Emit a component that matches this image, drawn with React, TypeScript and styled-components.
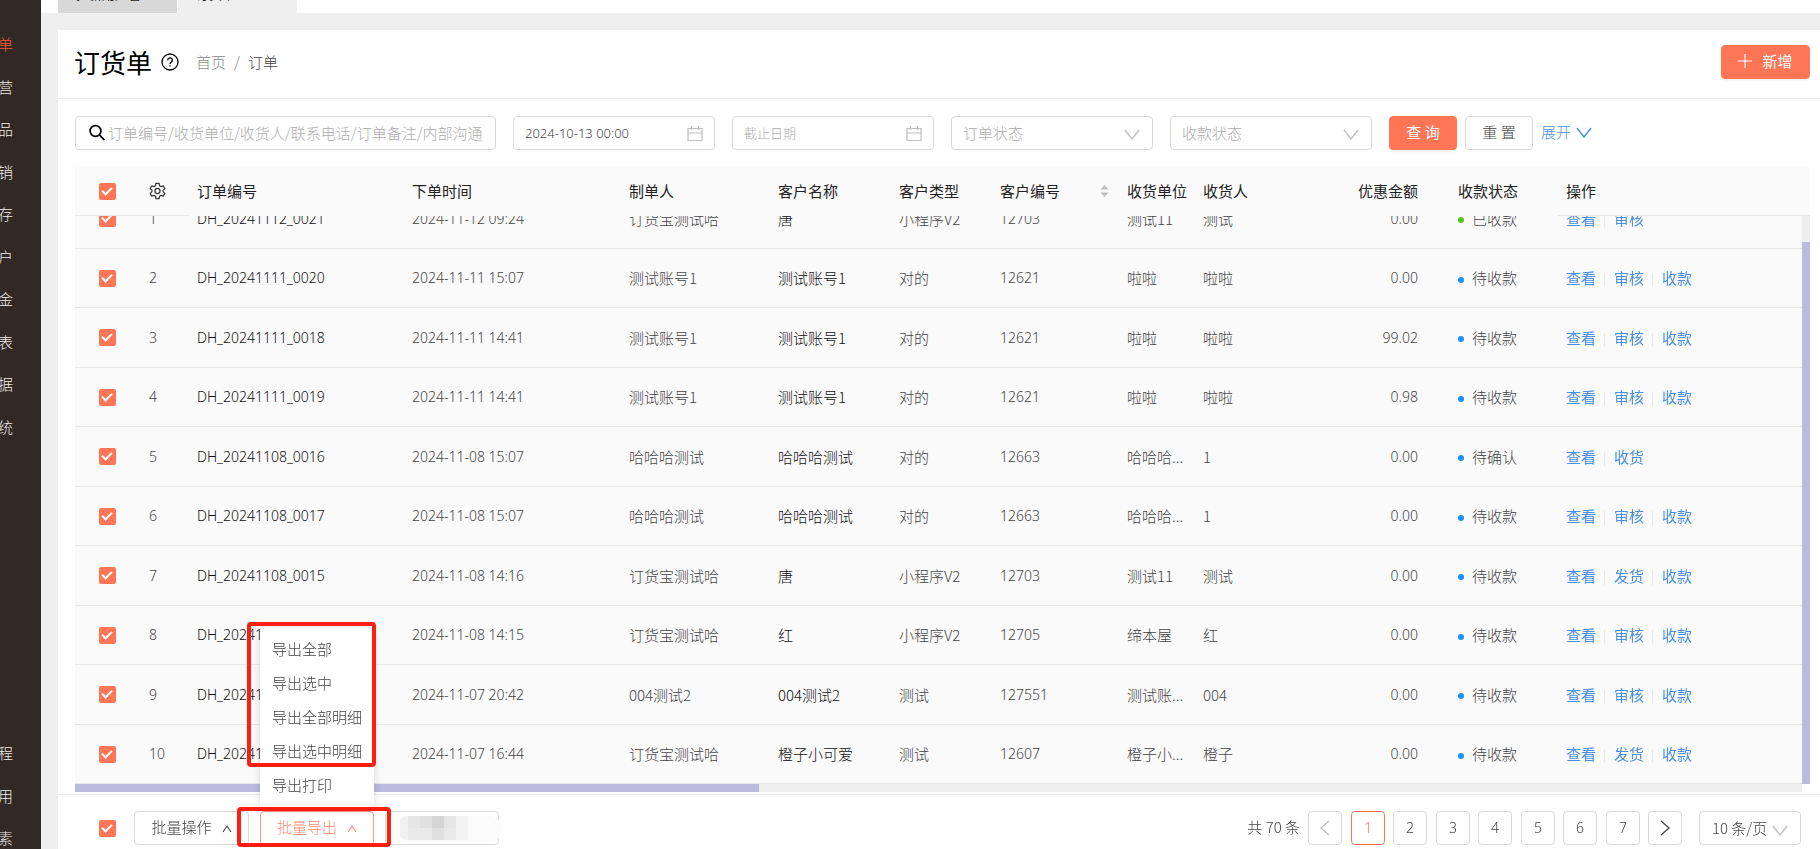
import React, { useLayoutEffect, useRef } from 'react';
import styled, { createGlobalStyle, css } from 'styled-components';

const accent = '#ff7657';
const link = '#4a90e2';
const line = '#e8e8e8';
const cjk = `'Noto Sans CJK SC', 'Liberation Sans', sans-serif`;
const latin = `'Noto Sans', 'Noto Sans CJK SC', sans-serif`;

const Global = createGlobalStyle`
  *, *::before, *::after { box-sizing: border-box; }
  body { margin: 0; font: 300 15px/22px ${cjk}; color: #444; background: #efefef; }
  button, input, select { font: inherit; color: inherit; }
  a { color: ${link}; text-decoration: none; }
`;

const Shell = styled.div`display: flex; height: 100vh; overflow: hidden;`;

const Sidebar = styled.nav`
  flex: none; width: 41px; overflow: hidden; background: #322824;
  display: flex; flex-direction: column; justify-content: space-between;
  padding-top: 23px;
`;
const NavGroup = styled.div`
  display: flex; flex-direction: column;
  &:last-child { margin-bottom: -10px; }
`;
const NavItem = styled.a<{ $active?: boolean }>`
  display: flex; align-items: center; flex: none; height: 42px; margin-left: -2px;
  color: ${p => (p.$active ? '#f5593a' : '#f0eeed')};
  &:nth-child(even) { height: 43px; }
`;

const Main = styled.main`flex: 1; min-width: 0; display: flex; flex-direction: column;`;
const TabBar = styled.div`
  flex: none; display: flex; align-items: flex-end; gap: 1px; height: 13px;
  margin-bottom: 17px; padding-left: 17px; background: #fff; overflow: hidden;
`;
const Tab = styled.a<{ $active?: boolean }>`
  flex: none; width: 119px; height: 34px; padding: 0 18px; font-size: 13px; line-height: 30px;
  white-space: nowrap; font-weight: 400;
  color: #222; background: ${p => (p.$active ? '#efefef' : '#d8d8d8')};
`;
const Card = styled.section`
  flex: 1; min-height: 0; margin-left: 17px; background: #fff;
  display: flex; flex-direction: column;
`;
const Header = styled.header`
  flex: none; display: flex; align-items: center; height: 69px; padding: 0 10px 4px 16px;
  border-bottom: 1px solid #eee;
`;
const Title = styled.h1`margin: 0 9px 0 0; font-size: 26px; line-height: 36px; font-weight: 400; color: #000;`;
const Crumbs = styled.nav`
  display: flex; gap: 8px; margin-left: 17px; color: #888;
  a { color: #888; font-weight: 300; }
  b { font-weight: 300; color: #444; }
`;
const Button = styled.button<{ $kind?: 'primary' | 'ghost'; $w?: number }>`
  display: flex; align-items: center; justify-content: center; gap: 10px;
  height: 34px; width: ${p => p.$w ?? 68}px; padding: 0 0 2px; flex: none;
  border: 1px solid #d9d9d9; border-radius: 4px; background: #fff; white-space: nowrap;
  ${p => p.$kind === 'primary' && css`
    border-color: ${accent}; background: ${accent}; color: #fff; font-weight: 400;
    box-shadow: 0 2px 2px rgba(0, 0, 0, 0.05);
  `}
  ${p => p.$kind === 'ghost' && css`border-color: #ff9a83; color: #ff8a70;`}
`;
const MoreButton = styled(Button)`justify-content: flex-end; padding: 0; svg { flex: none; margin-right: -4px; }`;
const Push = styled.div`margin-left: auto;`;

const Filters = styled.form`
  flex: none; display: flex; align-items: center; gap: 17px; padding: 17px;
`;
const Field = styled.label<{ $w: number; $small?: boolean }>`
  display: flex; align-items: center; flex: 0 1 ${p => p.$w}px; min-width: 0; height: 34px;
  padding: 0 11px; border: 1px solid #d9d9d9; border-radius: 4px; background: #fff;
  input {
    flex: 1; min-width: 0; padding: 0; border: 0; outline: 0; background: none;
    font-size: ${p => (p.$small ? 13 : 15)}px;
    ${p => p.$small && `font-family: ${latin};`}
  }
  input::placeholder { color: #adadad; opacity: 1; }
  svg { flex: none; }
`;
const SearchField = styled(Field)`svg { margin: 0 2px 0 1px; }`;
const Select = styled.select`
  flex: 1; min-width: 0; appearance: none; padding: 0; border: 0; outline: 0;
  background: none; color: inherit;
`;
const SelectField = styled(Field)`
  color: #adadad;
  padding-right: 12px;
  svg { margin-top: 3px; }
`;
const Actions = styled.div`
  display: flex; align-items: center; gap: 8px;
  > a { display: flex; align-items: center; gap: 5px; padding-bottom: 2px; white-space: nowrap; }
`;

const TableArea = styled.div`
  flex: 1; min-height: 0; margin: 0 10px 0 17px; display: flex; flex-direction: column;
`;
const Table = styled.table`
  width: 100%; table-layout: fixed; border-collapse: separate; border-spacing: 0; background: #fafafa;
  th, td { padding: 0 8px; text-align: left; font-weight: 300; white-space: nowrap; overflow: hidden; }
  th { height: 49px; color: #222; font-weight: 400; border-bottom: 1px solid #fafafa; }
  td { height: 60px; border-bottom: 1px solid ${line}; }
  tr:nth-child(even) td { height: 59px; }
  th:nth-child(-n+2), th:last-child { border-bottom-color: ${line}; }
  tr > :first-child { padding-left: 24px; }
`;
const Cell = styled.td<{ $num?: boolean; $dark?: boolean; $right?: boolean }>`
  ${p => p.$num && css`font-family: ${latin}; font-size: 14px;`}
  ${p => p.$dark && css`color: #111;`}
  && { ${p => p.$right && css`text-align: right; padding-right: 32px;`} text-overflow: ellipsis; }
`;
const RightTh = styled.th`&& { text-align: right; padding-right: 32px; }`;
const SortTh = styled.div`display: flex; align-items: center; justify-content: space-between; padding-right: 2px;`;
const BodyRow = styled.div`flex: 1; min-height: 0; display: flex;`;
const Viewport = styled.div`flex: 1; min-width: 0; overflow: hidden auto; scrollbar-width: none;`;
const VTrack = styled.div`
  flex: none; width: 8px; background: #eee; display: flex; flex-direction: column; justify-content: flex-end;
  &::after { content: ''; height: 95.4%; background: #bbbadf; }
`;
const HTrack = styled.div`
  flex: none; height: 8px; margin: 0 8px 2px 0; background: #eee;
  &::after { content: ''; display: block; width: 39.6%; height: 8px; background: #bbbadf; }
`;
const Check = styled.input.attrs({ type: 'checkbox' })`
  appearance: none; display: block; flex: none; width: 17px; height: 17px; margin: 0; border-radius: 2px;
  background: ${accent}; position: relative;
  &:checked::after {
    content: ''; position: absolute; left: 5px; top: 2px; width: 6px; height: 10px;
    border: solid #fff; border-width: 0 2px 2px 0; transform: rotate(45deg);
  }
`;
const Status = styled.span<{ $c: string }>`
  display: flex; align-items: center; gap: 8px;
  &::before { content: ''; width: 6px; height: 6px; margin-top: 3px; border-radius: 50%; background: ${p => p.$c}; }
`;
const Ops = styled.div`
  display: flex; align-items: center;
  a { font-weight: 400; }
  a + a { margin-left: 8px; padding-left: 10px; position: relative; }
  a + a::before { content: ''; position: absolute; left: 0; top: 6px; height: 14px; border-left: 1px solid ${line}; }
`;

const Footer = styled.footer`
  flex: none; display: flex; align-items: center; height: 55px; padding: 12px 19px 0 41px;
  border-top: 1px solid #eee;
`;
const Batch = styled.div`display: flex; gap: 11px; margin-left: 18px;`;
const MenuAnchor = styled.div`position: relative;`;
const Menu = styled.ul`
  position: absolute; left: 0; bottom: 37px; width: 114px; margin: 0; padding: 5px 0; list-style: none;
  background: #fff; border-radius: 4px; box-shadow: 0 2px 8px rgba(0, 0, 0, 0.15);
  li { height: 34px; padding: 0 12px; line-height: 32px; white-space: nowrap; }
`;
const Mark = styled.div<{ $l: number; $b: number; $w: number; $h: number }>`
  position: absolute; z-index: 2; pointer-events: none; border: 4px solid #ff1f12; border-radius: 4px;
  left: ${p => p.$l}px; bottom: ${p => p.$b}px; width: ${p => p.$w}px; height: ${p => p.$h}px;
`;
const Pager = styled.nav`
  display: flex; align-items: center; margin-left: auto;
  > span { margin-right: 8px; padding-bottom: 2px; }
`;
const Page = styled.button<{ $on?: boolean }>`
  display: flex; align-items: center; justify-content: center; width: 34px; height: 34px; padding: 0 0 1px;
  margin-right: 8px; border-radius: 4px; background: #fff; font-family: ${latin}; font-size: 14px;
  border: 1px solid ${p => (p.$on ? accent : '#d9d9d9')};
  color: ${p => (p.$on ? accent : '#444')};
  &:nth-child(even) { margin-right: 9px; }
  &:disabled { color: #bfbfbf; }
`;
const SizeField = styled(Field)`margin-left: 8px; flex: none; width: 102px; padding: 0 12px; svg { margin-top: 5px; }`;

const Chevron = ({ d = '', w = 16, h = 11, c = 'currentColor', s = 1.3 }) => (
  <svg width={w} height={h} viewBox={`0 0 ${w} ${h}`} fill="none" stroke={c} strokeWidth={s}><path d={d} /></svg>
);
const Down = ({ c = '#bfbfbf' }) => <Chevron d="M1 1l7 9 7-9" c={c} s={1.4} />;
const Up = () => <svg width="10" height="11" viewBox="0 0 10 11" fill="none" stroke="currentColor" strokeWidth="1.100"><path d="M1 10l4-6 4 6" /></svg>;
const CalendarIcon = () => (
  <svg width="16" height="18" viewBox="0 0 16 18" fill="none" stroke="#bfbfbf" strokeWidth="1.200">
    <path d="M1 4.500h14v12H1zM1 9h14M4.500 2v4M11.500 2v4" />
  </svg>
);
const HelpIcon = () => (
  <svg width="18" height="18" viewBox="0 0 18 18" fill="none" stroke="#000" strokeWidth="1.300">
    <circle cx="9" cy="9" r="8" />
    <path d="M6.700 7.200a2.300 2.300 0 1 1 3.600 1.900c-.9.6-1.300 1-1.300 1.900M9 12.200v1.400" />
  </svg>
);
const SearchIcon = () => (
  <svg width="18" height="18" viewBox="0 0 18 18" fill="none" stroke="#000" strokeWidth="1.700">
    <circle cx="7.500" cy="7" r="5.400" /><path d="M11.500 11l5 5.200" />
  </svg>
);
const GearIcon = () => (
  <svg width="17" height="20" viewBox="0 0 18 18" fill="none" stroke="#333" strokeWidth="1.300" strokeLinejoin="round">
    <path d="M7.300 1h3.400l.5 2.500 1.500.9 2.400-.9 1.700 3-1.900 1.600v1.800l1.900 1.600-1.700 3-2.400-.9-1.500.9-.5 2.500H7.300l-.5-2.500-1.500-.9-2.400.9-1.700-3 1.900-1.600V8.100L1.200 6.500l1.700-3 2.400.9 1.500-.9z" />
    <circle cx="9" cy="9" r="2.700" />
  </svg>
);
const GearButton = styled.button`display: flex; padding: 0; border: 0; background: none;`;
const SortIcon = () => (
  <svg width="9" height="14" viewBox="0 0 9 14" fill="#bfbfbf"><path d="M4.500 1L8.500 5.500h-8zM4.500 13L8.500 8.500h-8z" /></svg>
);
const PlusIcon = () => (
  <svg width="14" height="14" viewBox="0 0 14 14" stroke="#fff" strokeWidth="1.200"><path d="M7 0v14M0 7h14" /></svg>
);
const Mosaic = () => (
  <svg width="102" height="30" viewBox="0 0 102 30">
    <rect x="0" y="3" width="102" height="26" rx="12" fill="#fbfbfb" />
    <path d="M8 3h12v24H8a12 12 0 0 1 0-24z" fill="#f0f0f0" />
    <path d="M8 3h12v12H8z" fill="#e6e6e6" /><path d="M20 3h12v12H20z" fill="#e0e0e0" />
    <path d="M32 3h12v12H32z" fill="#d5d5d5" /><path d="M44 3h12v12H44z" fill="#e6e6e6" />
    <path d="M8 15h24v12H8z" fill="#e9e9e9" /><path d="M32 15h12v12H32z" fill="#e0e0e0" />
    <path d="M44 15h12v12H44z" fill="#e9e9e9" /><path d="M56 3h12v24H56z" fill="#f3f3f3" />
  </svg>
);

const widths = [66, 48, 215, 217, 149, 121, 101, 127, 76, 125, 130, 108];
const Cols = () => (
  <colgroup>{widths.map((w, i) => <col key={i} style={{ width: w }} />)}<col /></colgroup>
);

const V = '查看', S = '审核', K = '收款', F = '发货';
type Row = [string, string, string, string, string, string, string, string, string, string, string[]];
const rows: Row[] = [
  ['DH_20241112_0021', '2024-11-12 09:24', '订货宝测试哈', '唐', '小程序V2', '12703', '测试11', '测试', '0.00', '已收款', [V, S]],
  ['DH_20241111_0020', '2024-11-11 15:07', '测试账号1', '测试账号1', '对的', '12621', '啦啦', '啦啦', '0.00', '待收款', [V, S, K]],
  ['DH_20241111_0018', '2024-11-11 14:41', '测试账号1', '测试账号1', '对的', '12621', '啦啦', '啦啦', '99.02', '待收款', [V, S, K]],
  ['DH_20241111_0019', '2024-11-11 14:41', '测试账号1', '测试账号1', '对的', '12621', '啦啦', '啦啦', '0.98', '待收款', [V, S, K]],
  ['DH_20241108_0016', '2024-11-08 15:07', '哈哈哈测试', '哈哈哈测试', '对的', '12663', '哈哈哈...', '1', '0.00', '待确认', [V, '收货']],
  ['DH_20241108_0017', '2024-11-08 15:07', '哈哈哈测试', '哈哈哈测试', '对的', '12663', '哈哈哈...', '1', '0.00', '待收款', [V, S, K]],
  ['DH_20241108_0015', '2024-11-08 14:16', '订货宝测试哈', '唐', '小程序V2', '12703', '测试11', '测试', '0.00', '待收款', [V, F, K]],
  ['DH_20241108_0014', '2024-11-08 14:15', '订货宝测试哈', '红', '小程序V2', '12705', '缔本屋', '红', '0.00', '待收款', [V, S, K]],
  ['DH_20241107_0013', '2024-11-07 20:42', '004测试2', '004测试2', '测试', '127551', '测试账...', '004', '0.00', '待收款', [V, S, K]],
  ['DH_20241107_0012', '2024-11-07 16:44', '订货宝测试哈', '橙子小可爱', '测试', '12607', '橙子小...', '橙子', '0.00', '待收款', [V, F, K]],
];

export default function App() {
  const viewport = useRef<HTMLDivElement>(null);
  useLayoutEffect(() => {
    const el = viewport.current;
    if (el) el.scrollTop = el.scrollHeight;
  }, []);

  return (
    <Shell>
      <Global />
      <Sidebar>
        <NavGroup>
          {['单', '营', '品', '销', '存', '户', '金', '表', '据', '统'].map((t, i) => (
            <NavItem key={t} href="#" $active={i === 0}>{t}</NavItem>
          ))}
        </NavGroup>
        <NavGroup>
          {['程', '用', '素'].map(t => <NavItem key={t} href="#">{t}</NavItem>)}
        </NavGroup>
      </Sidebar>
      <Main>
        <TabBar>
          <Tab href="#">拉新用户管理</Tab>
          <Tab href="#" $active>订货单</Tab>
        </TabBar>
        <Card>
          <Header>
            <Title>订货单</Title>
            <HelpIcon />
            <Crumbs><a href="#">首页</a><span>/</span><b>订单</b></Crumbs>
            <Push><Button $kind="primary" $w={89}><PlusIcon />新增</Button></Push>
          </Header>
          <Filters onSubmit={e => e.preventDefault()}>
            <SearchField $w={421}><SearchIcon /><input aria-label="搜索" placeholder="订单编号/收货单位/收货人/联系电话/订单备注/内部沟通" /></SearchField>
            <Field $w={202} $small><input aria-label="开始日期" defaultValue="2024-10-13 00:00" /><CalendarIcon /></Field>
            <Field $w={202} $small><input aria-label="截止日期" placeholder="截止日期" /><CalendarIcon /></Field>
            <SelectField $w={202}><Select aria-label="订单状态"><option>订单状态</option></Select><Down /></SelectField>
            <SelectField $w={202}><Select aria-label="收款状态"><option>收款状态</option></Select><Down /></SelectField>
            <Actions>
              <Button $kind="primary" type="submit">查 询</Button>
              <Button type="reset">重 置</Button>
              <a href="#">展开 <Down c={link} /></a>
            </Actions>
          </Filters>
          <TableArea>
            <Table>
              <Cols />
              <thead>
                <tr>
                  <th><Check defaultChecked aria-label="全选" /></th>
                  <th><GearButton aria-label="列设置"><GearIcon /></GearButton></th>
                  <th>订单编号</th><th>下单时间</th><th>制单人</th><th>客户名称</th><th>客户类型</th>
                  <th><SortTh>客户编号<SortIcon /></SortTh></th>
                  <th>收货单位</th><th>收货人</th><RightTh>优惠金额</RightTh><th>收款状态</th><th>操作</th>
                </tr>
              </thead>
            </Table>
            <BodyRow>
              <Viewport ref={viewport}>
                <Table>
                  <Cols />
                  <tbody>
                    {rows.map((r, i) => (
                      <tr key={r[0]}>
                        <td><Check defaultChecked aria-label={r[0]} /></td>
                        <Cell $num>{i + 1}</Cell>
                        <Cell $num $dark>{r[0]}</Cell>
                        <Cell $num>{r[1]}</Cell>
                        <Cell>{r[2]}</Cell>
                        <Cell $dark>{r[3]}</Cell>
                        <Cell>{r[4]}</Cell>
                        <Cell $num>{r[5]}</Cell>
                        <Cell>{r[6]}</Cell>
                        <Cell>{r[7]}</Cell>
                        <Cell $num $right>{r[8]}</Cell>
                        <td><Status $c={r[9] === '已收款' ? '#52c41a' : '#1890ff'}>{r[9]}</Status></td>
                        <td><Ops>{r[10].map(o => <a key={o} href="#">{o}</a>)}</Ops></td>
                      </tr>
                    ))}
                  </tbody>
                </Table>
              </Viewport>
              <VTrack />
            </BodyRow>
            <HTrack />
          </TableArea>
          <Footer>
            <Check defaultChecked aria-label="全选本页" />
            <Batch>
              <Button $w={115}>批量操作 <Up /></Button>
              <MenuAnchor>
                <Button $w={114} $kind="ghost">批量导出 <Up /></Button>
                <Menu>
                  {['导出全部', '导出选中', '导出全部明细', '导出选中明细', '导出打印'].map(t => <li key={t}>{t}</li>)}
                </Menu>
                <Mark $l={-13} $b={78} $w={129} $h={145} />
                <Mark $l={-23} $b={-2} $w={154} $h={40} />
              </MenuAnchor>
              <MoreButton $w={114} aria-label="更多"><Mosaic /></MoreButton>
            </Batch>
            <Pager>
              <span>共 70 条</span>
              <Page disabled aria-label="上一页"><Chevron d="M10 1L2 8l8 7" w={12} h={16} /></Page>
              {[1, 2, 3, 4, 5, 6, 7].map(n => <Page key={n} $on={n === 1}>{n}</Page>)}
              <Page aria-label="下一页"><Chevron d="M2 1l8 7-8 7" w={12} h={16} /></Page>
              <SizeField $w={102}><Select aria-label="每页条数"><option>10 条/页</option></Select><Down /></SizeField>
            </Pager>
          </Footer>
        </Card>
      </Main>
    </Shell>
  );
}
